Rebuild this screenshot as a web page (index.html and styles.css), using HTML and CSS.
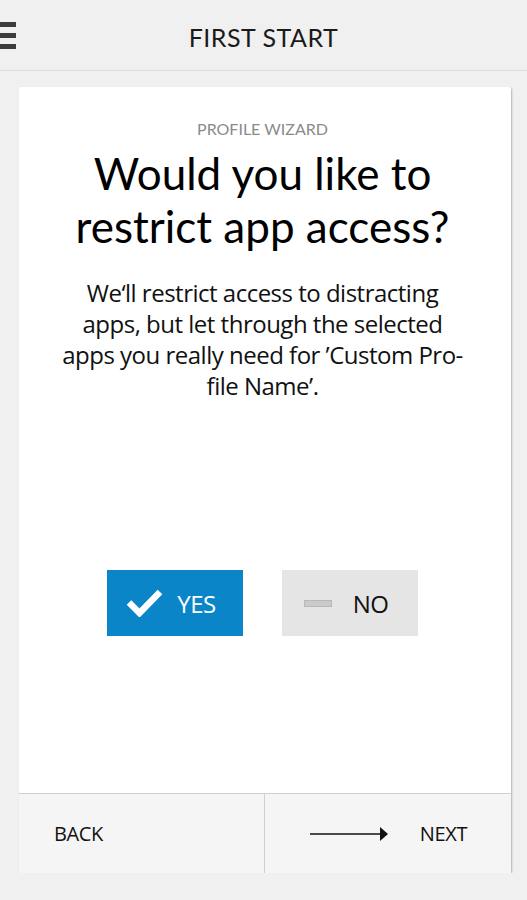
FILE: index.html
```html
<!DOCTYPE html>
<html>
<head>
    <title>First Start</title>
    <link rel="stylesheet" href="styles.css">
</head>
<body>
    <header class="topbar">
        <div class="menu">
            <span></span>
            <span></span>
            <span></span>
        </div>
        <h1>FIRST START</h1>
    </header>

    <main class="card">
        <section class="content">
            <p class="eyebrow">PROFILE WIZARD</p>
            <h2>Would you like to restrict app access?</h2>
            <p class="lead">We‘ll restrict access to distracting<br>apps, but let through the selected<br>apps you really need for ’Custom Pro-<br>file Name’.</p>

            <div class="choices">
                <button type="button" class="choice yes">
                    <svg width="37" height="28" viewBox="0 0 37 28">
                        <path d="M3 13.5 L13.5 24 L34 3" fill="none" stroke="#fff" stroke-width="6.5" stroke-linejoin="miter"/>
                    </svg>
                    <span>YES</span>
                </button>
                <button type="button" class="choice no">
                    <span class="dash"></span>
                    <span>NO</span>
                </button>
            </div>
        </section>

        <footer class="nav">
            <button type="button" class="navButton back">BACK</button>
            <button type="button" class="navButton next">
                <svg width="80" height="16" viewBox="0 0 80 16">
                    <line x1="0" y1="8" x2="70" y2="8" stroke="#111" stroke-width="1.5"/>
                    <path d="M70 1 L78 8 L70 15 Z" fill="#111"/>
                </svg>
                <span>NEXT</span>
            </button>
        </footer>
    </main>
</body>
</html>
```

FILE: styles.css
```css
body {
    margin: 0;
    background-color: #f0f0f0;
    font-family: 'Lato', 'Open Sans', Arial, sans-serif;
    color: #111111;
}

.topbar {
    height: 71px;
    box-sizing: border-box;
    padding-top: 4px;
    display: flex;
    align-items: center;
    justify-content: center;
    position: relative;
    border-bottom: 1px solid #dcdcdc;
}

.topbar h1 {
    margin: 0;
    font-weight: 400;
    font-size: 25px;
    letter-spacing: 0.5px;
    color: #1a1a1a;
}

.menu {
    position: absolute;
    left: 0;
    top: 22px;
    display: flex;
    flex-direction: column;
    gap: 6px;
}

.menu span {
    display: block;
    width: 16px;
    height: 5px;
    background-color: #3c3c3c;
}

.card {
    margin: 16px 16px 0 19px;
    height: 786px;
    background-color: #ffffff;
    display: flex;
    flex-direction: column;
    box-shadow: 1px 1px 2px rgba(0, 0, 0, 0.25);
    border-radius: 2px;
}

.content {
    flex: 1;
    display: flex;
    flex-direction: column;
    align-items: center;
    text-align: center;
    padding-right: 5px;
}

.eyebrow {
    margin: 32px 0 0;
    font-size: 16px;
    color: #8a8a8a;
    letter-spacing: 0;
}

h2 {
    margin: 9px 0 0;
    width: 400px;
    font-weight: 400;
    font-size: 44px;
    line-height: 53px;
    color: #000000;
}

.lead {
    margin: 24px 0 0;
    font-family: 'Open Sans', Arial, sans-serif;
    font-size: 24px;
    line-height: 31px;
    letter-spacing: -0.5px;
    color: #111111;
}

.choices {
    margin-top: 169px;
    display: flex;
    gap: 39px;
}

.choice {
    width: 136px;
    height: 66px;
    border: none;
    display: flex;
    align-items: center;
    justify-content: center;
    font-family: 'Open Sans', Arial, sans-serif;
    font-size: 24px;
    letter-spacing: -0.5px;
    cursor: pointer;
}

.yes {
    background-color: #0a86c8;
    color: #ffffff;
    gap: 14px;
}

.yes svg {
    margin-left: -8px;
}

.no {
    background-color: #e5e5e5;
    color: #111111;
    gap: 21px;
}

.dash {
    display: block;
    width: 26px;
    height: 5px;
    margin-left: -8px;
    background-color: #cacaca;
    border: 1px solid #b8b8b8;
}

.nav {
    height: 79px;
    display: flex;
    background-color: #f5f5f5;
    border-top: 1px solid #d0d0d0;
}

.navButton {
    width: 50%;
    box-sizing: border-box;
    border: none;
    background: none;
    font-family: 'Open Sans', Arial, sans-serif;
    font-size: 20px;
    letter-spacing: -0.4px;
    color: #111111;
    display: flex;
    align-items: center;
    cursor: pointer;
}

.back {
    padding-left: 35px;
    border-right: 1px solid #d0d0d0;
}

.next {
    justify-content: flex-end;
    padding-right: 44px;
    gap: 30px;
}
```
